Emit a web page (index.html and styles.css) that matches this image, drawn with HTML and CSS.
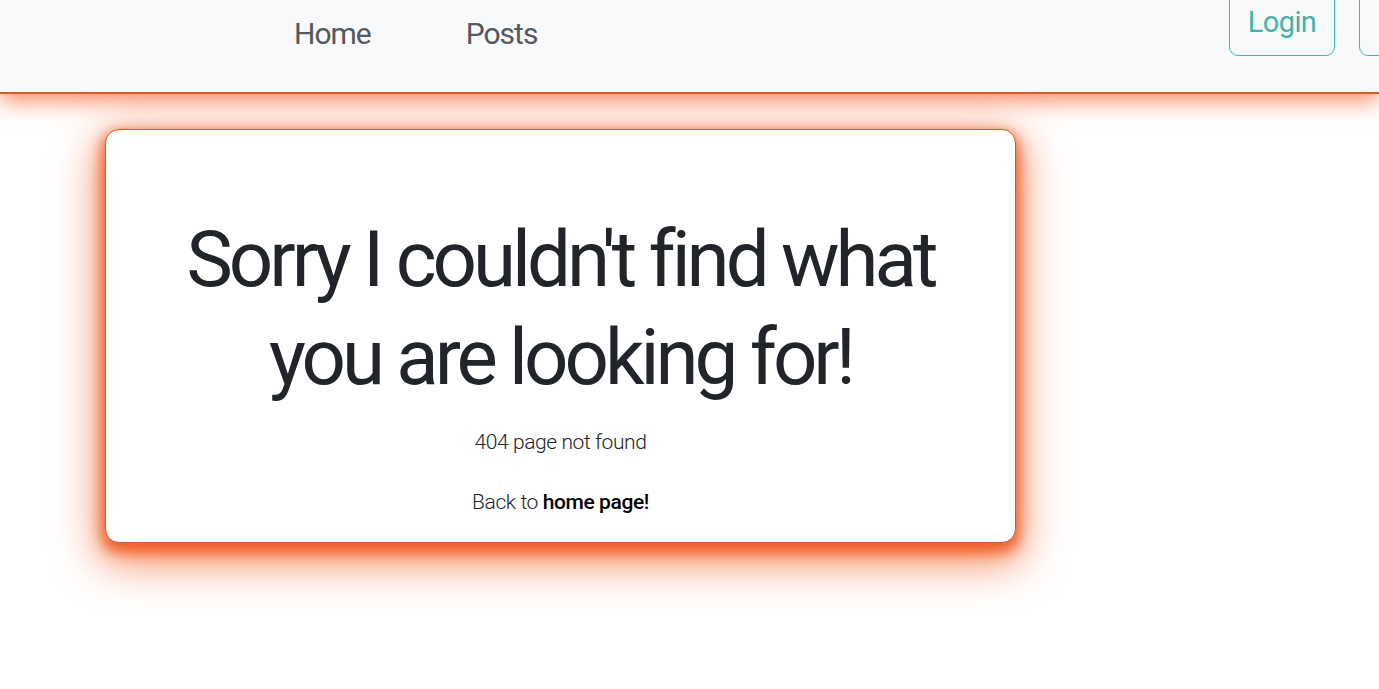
FILE: index.html
```html
<!DOCTYPE html>
<html lang="en">
<head>
<meta charset="utf-8">
<title>404</title>
<link rel="stylesheet" href="styles.css">
</head>
<body>
<header class="navbar">
  <nav class="nav-links">
    <a class="nav-link" href="#">Home</a>
    <a class="nav-link" href="#">Posts</a>
  </nav>
  <div class="nav-actions">
    <a class="btn-outline" href="#">Login</a>
    <a class="btn-outline btn-wide" href="#">Sign up</a>
  </div>
</header>
<main class="page">
  <section class="card">
    <h1 class="title">Sorry I couldn't find what<br>you are looking for!</h1>
    <p class="subtitle">404 page not found</p>
    <p class="back">Back to <a class="home-link" href="#">home page!</a></p>
  </section>
</main>
</body>
</html>
```
FILE: styles.css
```css
html {
  overflow: hidden;
  height: 100%;
}

body {
  margin: 0;
  padding: 0;
  min-height: 100%;
  background: #ffffff;
  font-family: Roboto, "Noto Sans", "Liberation Sans", sans-serif;
  color: #212529;
}

.navbar {
  height: 92px;
  background: #f8f9fa;
  border-bottom: 2px solid #ee5418;
  box-shadow: 0 6px 22px rgba(240, 90, 30, 0.75);
  display: flex;
  align-items: flex-start;
  position: relative;
  z-index: 2;
}

.nav-links {
  display: flex;
  gap: 95px;
  padding-left: 294px;
  padding-top: 16px;
}

.nav-link {
  font-size: 30px;
  line-height: 36px;
  color: #55595d;
  text-decoration: none;
  letter-spacing: -1px;
  font-weight: 400;
}

.nav-actions {
  display: flex;
  gap: 24px;
  margin-left: auto;
  margin-right: -122px;
  margin-top: -10px;
  flex-shrink: 0;
}

.btn-outline {
  display: block;
  width: 106px;
  height: 66px;
  padding-top: 14px;
  box-sizing: border-box;
  border: 1px solid #44b6a9;
  border-radius: 9px;
  color: #41b5a6;
  font-size: 29px;
  line-height: 34px;
  letter-spacing: -0.6px;
  text-align: center;
  text-decoration: none;
  white-space: nowrap;
}

.btn-wide {
  width: 142px;
}

.page {
  padding: 35px 0 120px 105px;
}

.card {
  width: 911px;
  height: 414px;
  box-sizing: border-box;
  background: #ffffff;
  border: 1px solid #e9531c;
  border-radius: 14px;
  box-shadow: 0 6px 14px 3px rgba(236, 84, 26, 0.9), 0 14px 44px 6px rgba(240, 100, 40, 0.75);
  display: flex;
  flex-direction: column;
  align-items: center;
  padding-top: 81px;
  text-align: center;
}

.title {
  margin: 0;
  font-size: 78px;
  line-height: 98px;
  font-weight: 400;
  color: #212529;
  letter-spacing: -4px;
  white-space: nowrap;
}

.subtitle {
  margin: 20px 0 0;
  font-size: 21px;
  line-height: 30px;
  font-weight: 300;
  letter-spacing: -0.4px;
  color: #212529;
}

.back {
  margin: 30px 0 0;
  font-size: 21px;
  line-height: 30px;
  font-weight: 300;
  letter-spacing: -0.4px;
  color: #212529;
}

.home-link {
  color: #000000;
  text-decoration: none;
  font-weight: 500;
}
```
